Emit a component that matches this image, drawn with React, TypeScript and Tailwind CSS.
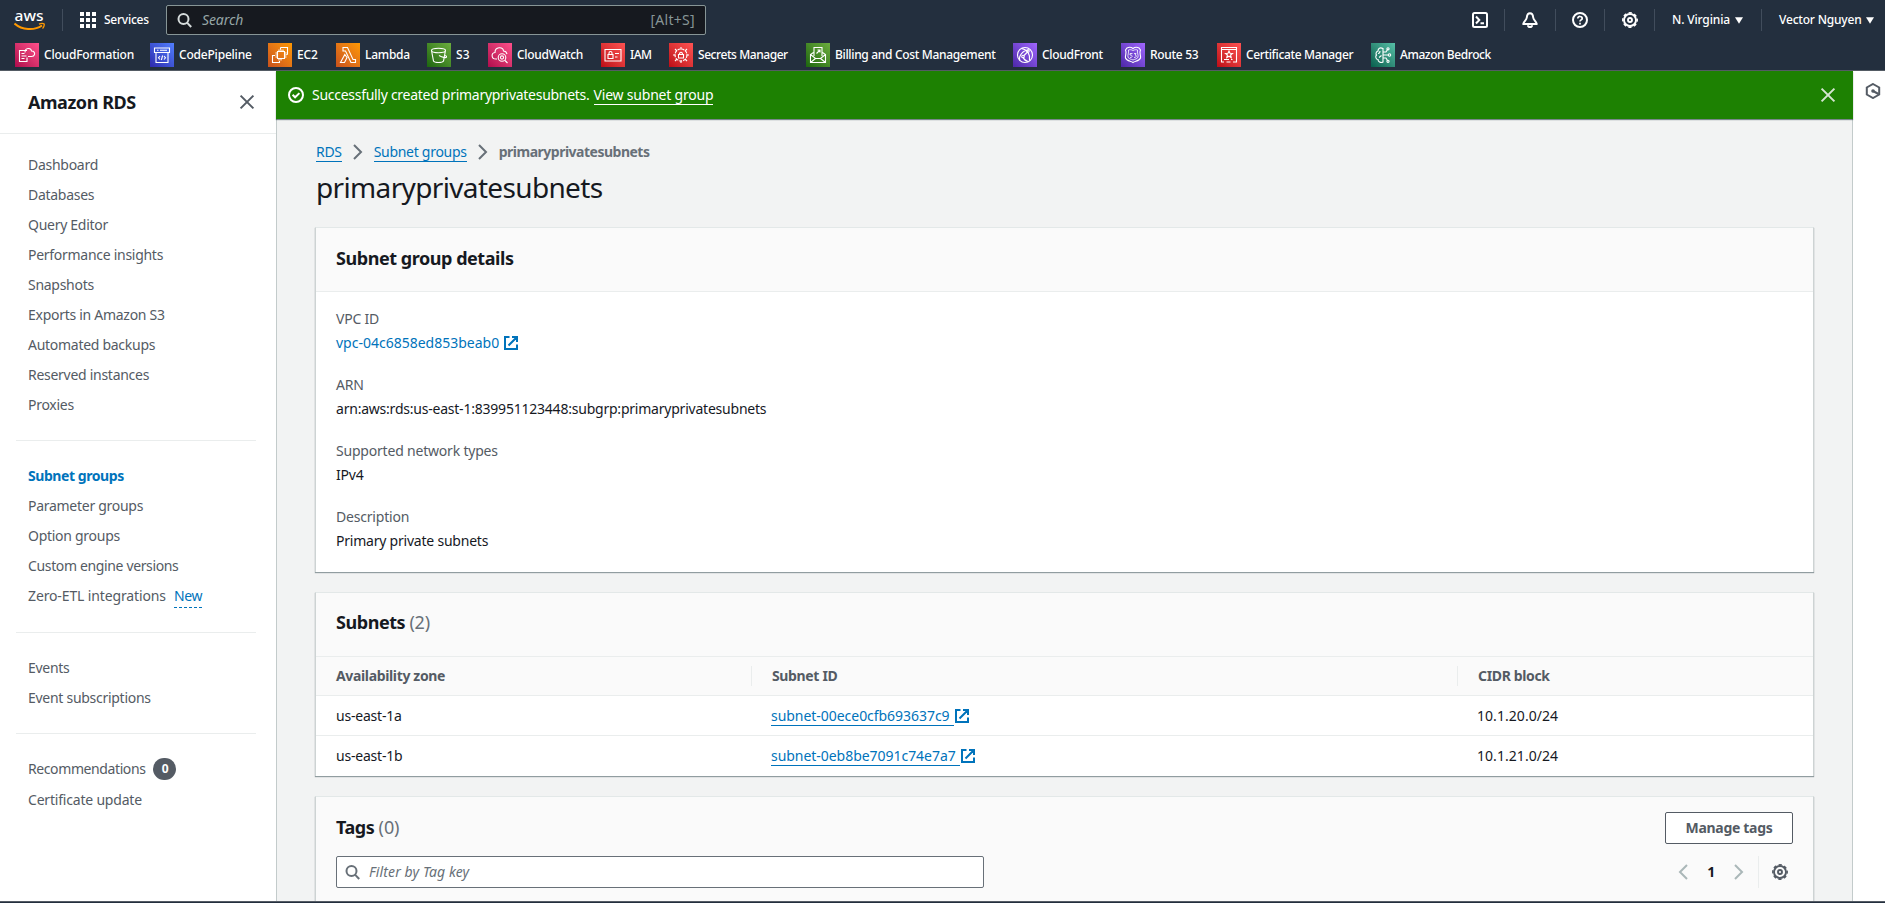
import React from "react";

type IconProps = { className?: string };

const Close = ({ className = "" }: IconProps) => (
  <svg viewBox="0 0 16 16" className={"h-4 w-4 shrink-0 " + className} fill="none" stroke="currentColor" strokeWidth="2">
    <path d="M1.6 1.6l12.8 12.8M14.4 1.6L1.6 14.4" />
  </svg>
);

const Chevron = ({ className = "" }: IconProps) => (
  <svg viewBox="0 0 16 16" className={"h-4 w-4 shrink-0 " + className} fill="none" stroke="currentColor" strokeWidth="2">
    <path d="M4 1l7 7-7 7" />
  </svg>
);

const External = () => (
  <svg viewBox="0 0 16 16" className="h-4 w-4 shrink-0" fill="none" stroke="currentColor" strokeWidth="2">
    <path d="M14 9.500v4.500H2V2h4.500M9 2h5v5M14 2L5.500 10.500" />
  </svg>
);

const Search = ({ className = "" }: IconProps) => (
  <svg viewBox="0 0 16 16" className={"h-4 w-4 shrink-0 " + className} fill="none" stroke="currentColor" strokeWidth="2">
    <circle cx="6.500" cy="7" r="5" />
    <path d="M10 10.600L14.200 15" />
  </svg>
);

const Gear = ({ className = "" }: IconProps) => (
  <svg viewBox="0 0 16 16" className={"h-4 w-4 shrink-0 " + className} fill="none" stroke="currentColor">
    <circle cx="8" cy="8" r="6" strokeWidth="1.900" />
    <circle cx="8" cy="8" r="7.200" strokeWidth="1.500" strokeDasharray="3.250 2.405" strokeDashoffset="1.625" />
    <circle cx="8" cy="8" r="2" strokeWidth="1.900" />
  </svg>
);

type Favorite = { name: string; width: string; fill: string; glyph: React.ReactNode };

const pink = "bg-linear-to-tr from-[#b0084d] to-[#ff4f8b]";
const blue = "bg-linear-to-tr from-[#2e27ad] to-[#527fff]";
const orange = "bg-linear-to-tr from-[#c8511b] to-[#ff9900]";
const green = "bg-linear-to-tr from-[#1b660f] to-[#6cae3e]";
const red = "bg-linear-to-tr from-[#bd0816] to-[#ff5252]";
const purple = "bg-linear-to-tr from-[#4d27a8] to-[#a166ff]";
const teal = "bg-linear-to-tr from-[#055f4e] to-[#56c0a7]";

const favorites: Favorite[] = [
  { name: "CloudFormation", width: "w-[135px] tracking-[-0.2px]", fill: pink, glyph: <path d="M12 7.500H4.500v11H12v-4M6.500 10.500h3M6.500 13h5M6.500 15.500h3M10 9.500c0-5 6-5 6.500-1.500 2.500 0 3.500 2 3 3.500-.4 1.500-1.500 2-3 2h-3.500" /> },
  { name: "CodePipeline", width: "w-[118px] tracking-[-0.2px]", fill: blue, glyph: <path d="M4.500 5h15v4.500h-15zM6 9.500V19.500h12V9.500M7 7.300h1.500M10 7.300h7M10 13l-1.500 1.800 1.500 1.700M14 13l1.500 1.800-1.500 1.700M12.600 12.500l-1.200 4.500" /> },
  { name: "EC2", width: "w-[68px] tracking-[-0.2px]", fill: orange, glyph: <path d="M9.500 8.500h7v7h-7zM11 8.500V6.500M13 8.500V6.500M15 8.500V6.500M16.500 10h2M16.500 12h2M16.500 14h2M11 15.500v2M13 15.500v2M9.500 10h-2M9.500 12h-2M9.500 14h-2M12.500 4.500h7v7M7 12.500H4.500v7h7V18M12.500 4.500v2M19.500 11.500h-1" /> },
  { name: "Lambda", width: "w-[91px] tracking-[-0.25px]", fill: orange, glyph: <path d="M7 4.500h4.500l5.500 12h2.500v3H15L9.500 8H7zM8.800 11.500L4.500 19.500h4L11 14.500z" /> },
  { name: "S3", width: "w-[61px] tracking-[0.1px]", fill: green, glyph: <path d="M4.500 7.500c0-3 14-3 14 0s-14 3-14 0l2 10.500c1 2 9 2 10 0l2-10.500M12 12.500c3 1.500 7 3 7.500 1.500s-2-1.500-2-1.500" /> },
  { name: "CloudWatch", width: "w-[113px] tracking-[-0.3px]", fill: pink, glyph: <><path d="M9 16H8c-5 0-5-6-1-6.500 0-6 8-6 8.500-1.500 2 0 3 1 3.500 3M17 17.500l2.500 2.500" /><circle cx="14" cy="14.500" r="3.800" /><circle cx="14" cy="14.500" r="1.600" /></> },
  { name: "IAM", width: "w-[68px] tracking-[-0.6px]", fill: red, glyph: <path d="M4 6.500h16v11.500H4zM7 11.500h5v4H7zM8 11.500V10c0-2 3-2 3 0v1.500M14 10.500h4M14 14h2.500" /> },
  { name: "Secrets Manager", width: "w-[137px] tracking-[-0.44px]", fill: red, glyph: <><circle cx="12" cy="12" r="6" strokeDasharray="3 1" /><path d="M9.500 11.500h5v3.500h-5zM10.500 11.500c0-3 3-3 3 0M12 4v2.500M12 17.500V20M4 12h2.500M17.500 12H20M6 6l2 2M18 6l-2 2M6 18l2-2M18 18l-2-2" /></> },
  { name: "Billing and Cost Management", width: "w-[207px] tracking-[-0.33px]", fill: green, glyph: <path d="M8 13V4.500h8V13M10.500 10.500L14 7M11.500 7H14v2.500M7.500 9.500l-3 2V19.500h15V11.500l-3-2M4.500 11.500l5 4h5l5-4M4.500 19.500l5-4M19.500 19.500l-5-4" /> },
  { name: "CloudFront", width: "w-[108px] tracking-[-0.3px]", fill: purple, glyph: <><circle cx="12" cy="12" r="7.500" /><path d="M7 17.500C5 13 10 7 16 7M8.500 5.500c6 1 9 6 8 12M11 12.500l4-4M10 14c1 3 3 4 5 4.500" /><circle cx="10" cy="13.500" r="1.300" /><circle cx="15" cy="8" r="1.200" /></> },
  { name: "Route 53", width: "w-[96px] tracking-[-0.3px]", fill: purple, glyph: <><path d="M12 5.500c2-1.500 4-1.500 6-.5l1.500 2c-1.500 3 .5 5 0 8-1 3-5 3-7.500 4.500-2.500-1.500-6.500-1.500-7.500-4.500-.5-3 1.500-5 0-8L6 5c2-1 4-1 6 .5z" /><path d="M12 7.500c2-1 3-1 4.500-.5-.5 3 1 5 .5 7-.5 2-3 2-5 3-2-1-4.500-1-5-3-.5-2 1-4 .5-7C9 6.500 10 6.500 12 7.500zM9 10.500h2.500M9 10.500v1.500c3 0 3 2.500 0 2.500M13 10.500h2l-1 1.500c2 0 2 2.500-1 2.500" strokeWidth=".8" /></> },
  { name: "Certificate Manager", width: "w-[154px] tracking-[-0.36px]", fill: red, glyph: <path d="M7 19H4.500V4.500h15V19H16M4.500 6.500h15M12 8l1 2.200 2.500.2-1.900 1.600.6 2.500-2.200-1.300-2.200 1.300.6-2.500-1.900-1.600 2.500-.2zM7 16.500h5M14 16.500h1.500M9.500 19h4" /> },
  { name: "Amazon Bedrock", width: "w-[130px] tracking-[-0.42px]", fill: teal, glyph: <><path d="M12 5v14.500M12 5.500c-3-1.500-5 0-5 2.500-2 .5-2.500 3-1.500 4-1.500 1.500-.5 4.500 1.500 4.500 0 2 2.500 4 5 2.500M9 8c0 2-1 2.500-2 2.500M8 14.500l2.500-2M12 9h3l1.500-2.500M12 12h5M12 15h3l1.500 2.500" /><circle cx="17" cy="5.800" r="1.100" /><circle cx="18.500" cy="12" r="1.200" /><circle cx="17" cy="18.300" r="1.100" /></> },
];

const HeaderDivider = () => <div className="h-[22px] w-px shrink-0 bg-[#414d5c]" />;

const Caret = () => (
  <svg viewBox="0 0 8 7" className="h-[7px] w-2 shrink-0" fill="currentColor">
    <path d="M0 .3h8L4 6.800z" />
  </svg>
);

function TopBar() {
  return (
    <header className="h-[71px] shrink-0 border-b border-[#545b64] bg-[#232f3e] text-white">
      <div className="flex h-10 items-center">
        <svg viewBox="0 -8 32 30" className="-mt-[6px] ml-[14px] h-[30px] w-8 shrink-0">
          <text x="0.500" y="11" fontSize="15" fontFamily="Noto Sans, sans-serif" fontWeight="500" fill="#fff" textLength="29" lengthAdjust="spacingAndGlyphs" letterSpacing="0">aws</text>
          <path d="M0.500 13.500C8 20 20 21 28 15.500" fill="none" stroke="#ff9900" strokeWidth="2" />
          <path d="M25 14.200c2-1 4.500-.7 5.200-.2.300 1-.5 3.500-1.700 4.500" fill="none" stroke="#ff9900" strokeWidth="1.300" />
        </svg>
        <div className="ml-4 h-[22px] w-px bg-[#414d5c]" />
        <svg viewBox="0 0 16 16" className="ml-[17px] h-4 w-4 shrink-0" fill="currentColor">
          <path d="M0 0h4v4H0zM6 0h4v4H6zM12 0h4v4h-4zM0 6h4v4H0zM6 6h4v4H6zM12 6h4v4h-4zM0 12h4v4H0zM6 12h4v4H6zM12 12h4v4h-4z" />
        </svg>
        <span className="ml-2 w-[62px] text-xs font-medium tracking-[-0.25px]">Services</span>
        <div className="flex h-[30px] w-[540px] items-center rounded-[2px] border border-[#879596] bg-[#16191f] px-[10px]">
          <Search className="text-[#d5dbdb]" />
          <span className="ml-[9px] text-sm tracking-[-0.1px] text-[#95a5a6] italic">Search</span>
          <span className="ml-auto text-sm tracking-[0.3px] text-[#879596]">[Alt+S]</span>
        </div>
        <div className="ml-auto flex items-center">
          <svg viewBox="0 0 16 16" className="mr-4 h-4 w-4" fill="none" stroke="currentColor" strokeWidth="2">
            <rect x="1" y="1" width="14" height="14" rx="1.500" />
            <path d="M4 4.500L7.300 8 4 11.500M8.500 11.300H12" />
          </svg>
          <HeaderDivider />
          <svg viewBox="0 0 16 16" className="mr-[17px] ml-[17px] h-4 w-4" fill="none" stroke="currentColor" strokeWidth="2" strokeLinejoin="round">
            <path d="M8 1.200c-2 0-3 1.800-3.200 4.300C4.600 8 1.500 9.500 1.200 12h13.600c-.3-2.500-3.400-4-3.600-6.500C11 3 10 1.200 8 1.200z" />
            <path d="M6 13.200c0 2.400 4 2.400 4 0" />
          </svg>
          <HeaderDivider />
          <svg viewBox="0 0 16 16" className="mr-4 ml-4 h-4 w-4" fill="none" stroke="currentColor" strokeWidth="2">
            <circle cx="8" cy="8" r="7" />
            <path d="M5.800 6.600c0-3 4.400-2.600 4.400-.2C10.200 8 8 7.800 8 9.600M8 10.700v1.700" strokeWidth="1.700" />
          </svg>
          <HeaderDivider />
          <Gear className="mr-4 ml-[17px]" />
          <HeaderDivider />
          <div className="flex w-[106px] items-center pl-[17px] text-xs font-medium">
            <span className="w-[63px] tracking-[-0.15px] whitespace-nowrap">N. Virginia</span>
            <Caret />
          </div>
          <HeaderDivider />
          <div className="flex w-[123px] items-center pl-[17px] text-xs font-medium">
            <span className="w-[87px] tracking-[-0.2px] whitespace-nowrap">Vector Nguyen</span>
            <Caret />
          </div>
        </div>
      </div>
      <nav className="flex pt-[3px] pl-[15px]">
        {favorites.map((f) => (
          <a key={f.name} className={"flex h-6 shrink-0 items-center gap-[5px] text-xs font-medium whitespace-nowrap " + f.width}>
            <span className={"h-6 w-6 shrink-0 " + f.fill}>
              <svg viewBox="0 0 24 24" className="h-6 w-6" fill="none" stroke="#fff" strokeWidth="1.100">{f.glyph}</svg>
            </span>
            {f.name}
          </a>
        ))}
      </nav>
    </header>
  );
}

const navItem = "h-[30px] leading-[30px] whitespace-nowrap";

function SideNav() {
  return (
    <aside className="flex w-[277px] shrink-0 flex-col border-r border-[#c3cbcb] bg-white tracking-[-0.28px] text-[#545b64]">
      <div className="flex h-[63px] shrink-0 items-center justify-between border-b border-[#eaeded] pr-[21px] pl-7">
        <h2 className="-mt-px text-lg font-bold tracking-[-0.45px] text-[#16191f]">Amazon RDS</h2>
        <Close />
      </div>
      <div className="pt-4 pr-5 pl-4">
        <ul className="pl-3">
          {["Dashboard", "Databases", "Query Editor", "Performance insights", "Snapshots", "Exports in Amazon S3", "Automated backups", "Reserved instances", "Proxies"].map((t) => (
            <li key={t} className={navItem}>{t}</li>
          ))}
        </ul>
        <hr className="mt-5 mb-5 border-[#eaeded]" />
        <ul className="pl-3">
          <li className={navItem + " font-bold tracking-[-0.43px] text-[#0073bb]"}>Subnet groups</li>
          <li className={navItem}>Parameter groups</li>
          <li className={navItem}>Option groups</li>
          <li className={navItem + " tracking-[-0.36px]"}>Custom engine versions</li>
          <li className={"flex items-center " + navItem}>
            <span className="tracking-[-0.13px]">Zero-ETL integrations</span>
            <span className="mt-[1px] ml-2 h-[23px] border-b border-dashed border-[#0073bb] leading-[21px] text-[#0073bb]">New</span>
          </li>
        </ul>
        <hr className="mt-[21px] mb-5 border-[#eaeded]" />
        <ul className="pl-3">
          <li className={navItem}>Events</li>
          <li className={navItem}>Event subscriptions</li>
        </ul>
        <hr className="mt-5 mb-5 border-[#eaeded]" />
        <ul className="pl-3">
          <li className={"flex items-center " + navItem}>
            <span className="tracking-[-0.4px]">Recommendations</span>
            <span className="ml-2 flex h-[22px] w-[23px] items-center justify-center rounded-full bg-[#545b64] text-xs font-bold text-white">0</span>
          </li>
          <li className={"mt-px tracking-[-0.2px] " + navItem}>Certificate update</li>
        </ul>
      </div>
    </aside>
  );
}

const card = "-mx-px border-x border-t border-[#e3e8e8] border-x-[#cdd3d3] shadow-[0_1px_1px_0_rgba(0,28,36,0.4)]";
const cardTitle = "text-lg font-bold tracking-[-0.45px] text-[#16191f]";

function Field({ label, children }: { label: string; children: React.ReactNode }) {
  return (
    <div className="leading-6">
      <div className="tracking-[-0.2px] text-[#545b64]">{label}</div>
      <div className="flex items-center gap-1 tracking-[-0.22px]">{children}</div>
    </div>
  );
}

function SubnetRow({ zone, id, cidr, last }: { zone: string; id: string; cidr: string; last?: boolean }) {
  return (
    <div className={"grid h-10 grid-cols-[435px_706px_1fr] items-center pl-5 " + (last ? "" : "border-b border-[#eaeded]")}>
      <span className="tracking-[-0.2px]">{zone}</span>
      <a className="flex items-center tracking-[-0.04px] text-[#0073bb]">
        <span className="border-b border-[#0073bb] pr-1 leading-[19px]">{id}</span>
        <External />
      </a>
      <span className="tracking-[0.05px]">{cidr}</span>
    </div>
  );
}

function Content() {
  return (
    <main className="flex min-w-0 flex-1 flex-col">
      <div className="relative -ml-px flex h-12 w-[1577px] shrink-0 items-center bg-[#1d8102] pr-[17px] pl-3 text-white shadow-[0_1px_1px_0_rgba(0,28,36,0.5)]">
        <svg viewBox="0 0 16 16" className="mr-2 h-4 w-4 shrink-0" fill="none" stroke="currentColor" strokeWidth="2">
          <circle cx="8" cy="8" r="7" />
          <path d="M4.600 7.800l2.500 2.500 4.300-4.200" />
        </svg>
        <span className="tracking-[-0.28px]">Successfully created primaryprivatesubnets.</span>
        <a className="ml-1 border-b border-white leading-[18px] tracking-[-0.2px]">View subnet group</a>
        <Close className="ml-auto text-[#d5e5d1]" />
      </div>
      <div className="pt-[21px] pr-[39px] pl-[39px]">
        <div className="flex h-6 items-center">
          <a className="border-b border-[#0073bb] leading-[19px] text-[#0073bb]">RDS</a>
          <Chevron className="mr-2 ml-2 text-[#687078]" />
          <a className="border-b border-[#0073bb] leading-[19px] tracking-[-0.28px] text-[#0073bb]">Subnet groups</a>
          <Chevron className="mr-2 ml-2 text-[#687078]" />
          <span className="font-bold tracking-[-0.5px] text-[#687078]">primaryprivatesubnets</span>
        </div>
        <h1 className="mt-[5px] text-[28px] leading-9 tracking-[-0.65px] text-[#16191f]">primaryprivatesubnets</h1>
        <section className={"mt-[22px] h-[345px] bg-white " + card}>
          <div className="flex h-16 items-center border-b border-[#eaeded] bg-[#fafafa] pb-1 pl-5">
            <h2 className={cardTitle}>Subnet group details</h2>
          </div>
          <div className="flex flex-col gap-[18px] pt-[15px] pl-5">
            <Field label="VPC ID"><span className="tracking-[0px] text-[#0073bb]">vpc-04c6858ed853beab0</span><span className="text-[#0073bb]"><External /></span></Field>
            <Field label="ARN">arn:aws:rds:us-east-1:839951123448:subgrp:primaryprivatesubnets</Field>
            <Field label="Supported network types">IPv4</Field>
            <Field label="Description">Primary private subnets</Field>
          </div>
        </section>
        <section className={"mt-5 h-[184px] bg-white " + card}>
          <div className="flex h-16 items-center border-b border-[#eaeded] bg-[#fafafa] pb-1.5 pl-5">
            <h2 className={cardTitle}>Subnets <span className="font-normal tracking-[-0.2px] text-[#687078]">(2)</span></h2>
          </div>
          <div className="grid h-[39px] grid-cols-[435px_706px_1fr] items-center border-b border-[#eaeded] bg-[#fafafa] pl-5 font-bold tracking-[-0.35px] text-[#545b64]">
            <span>Availability zone</span>
            <span className="-ml-5 border-l border-[#eaeded] pl-5">Subnet ID</span>
            <span className="-ml-5 border-l border-[#eaeded] pl-5">CIDR block</span>
          </div>
          <SubnetRow zone="us-east-1a" id="subnet-00ece0cfb693637c9" cidr="10.1.20.0/24" />
          <SubnetRow zone="us-east-1b" id="subnet-0eb8be7091c74e7a7" cidr="10.1.21.0/24" last />
        </section>
        <section className={"mt-5 h-[160px] bg-[#fafafa] px-5 pt-[15px] " + card}>
          <div className="flex h-8 items-center justify-between">
            <h2 className={"-mt-0.5 " + cardTitle}>Tags <span className="font-normal tracking-[-0.1px] text-[#687078]">(0)</span></h2>
            <button className="h-8 w-32 rounded-[2px] border border-[#545b64] bg-white font-bold tracking-[-0.3px] text-[#545b64]">Manage tags</button>
          </div>
          <div className="mt-3 flex h-8 items-center justify-between">
            <div className="flex h-8 w-[648px] items-center gap-2 rounded-[2px] border border-[#687078] bg-white pl-2 text-[#687078]">
              <Search />
              <span className="tracking-[0.12px] italic">Filter by Tag key</span>
            </div>
            <div className="flex h-8 items-center">
              <Chevron className="rotate-180 text-[#aab7b8]" />
              <span className="w-10 text-center font-bold">1</span>
              <Chevron className="text-[#aab7b8]" />
              <div className="ml-[11px] h-8 w-px bg-[#eaeded]" />
              <Gear className="mr-[5px] ml-[13px] text-[#545b64]" />
            </div>
          </div>
        </section>
      </div>
    </main>
  );
}

export default function App() {
  return (
    <div className="flex h-[903px] w-[1885px] flex-col overflow-hidden bg-[#232f3e] font-['Noto_Sans','Open_Sans',sans-serif] text-sm tracking-[-0.33px] text-[#16191f]">
      <TopBar />
      <div className="flex h-[831px] shrink-0 overflow-hidden border-b border-[#545b64] bg-[#f2f3f3]">
        <SideNav />
        <Content />
        <aside className="flex w-[33px] shrink-0 justify-end border-l border-[#c3cbcb] bg-white pt-3 pr-[4px]">
          <svg viewBox="0 0 16 16" className="h-4 w-4 text-[#545b64]" fill="none" stroke="currentColor" strokeWidth="2">
            <path d="M8 1l6.200 3.500v7L8 15l-6.200-3.500v-7z" />
            <circle cx="8" cy="8" r="1.800" fill="currentColor" stroke="none" />
            <path d="M8 8l5.500 3" />
          </svg>
        </aside>
      </div>
    </div>
  );
}
